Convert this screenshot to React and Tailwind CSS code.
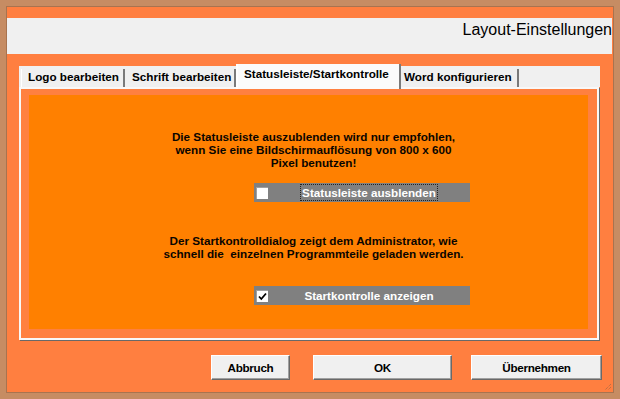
import React from "react";

const font = { fontFamily: '"Liberation Sans", Arial, sans-serif' };

function Tab({ label, selected, className = "" }) {
  if (selected) {
    return (
      <div className="relative z-10 h-[25px] mb-[-2px] bg-[#fbfbfb] border-l-2 border-l-white border-r-2 border-r-[#7a7a7a] pl-[6px] pt-[3px] text-[11.7px] leading-[14px] font-bold text-black whitespace-nowrap w-[165px]">
        {label}
      </div>
    );
  }
  return (
    <div className={`h-[18px] bg-[#f0f0f0] border-r-2 border-r-[#7a7a7a] pt-[1px] text-[11.7px] leading-[14px] font-bold text-black whitespace-nowrap ${className}`}>
      {label}
    </div>
  );
}

function CheckBar({ label, checked, focused }) {
  return (
    <div className="ml-[225px] w-[216px] h-[19px] bg-[#808080] flex items-center">
      <div className="ml-[2px] w-[12px] h-[12px] bg-white border-t border-l border-[#a0a0a0] flex items-center justify-center">
        {checked && (
          <svg width="9" height="9" viewBox="0 0 9 9">
            <path d="M1 4.5 L3.3 7 L8 1.5" stroke="#000" strokeWidth="1.8" fill="none" />
          </svg>
        )}
      </div>
      <div className="flex-1 flex justify-center">
        <span
          className={`px-[1px] text-[11.7px] leading-[15px] font-bold text-white whitespace-nowrap ${
            focused ? "outline outline-1 outline-dotted outline-[#222]" : ""
          }`}
        >
          {label}
        </span>
      </div>
    </div>
  );
}

function Btn({ label, w, className = "" }) {
  return (
    <div
      className={`h-[25px] bg-[#f0f0f0] border-t border-l border-t-white border-l-white border-r border-b border-r-[#696969] border-b-[#696969] shadow-[inset_-1px_-1px_0_#a0a0a0] flex items-center justify-center text-[11.7px] font-bold text-black tracking-[-0.3px] ${w} ${className}`}
    >
      {label}
    </div>
  );
}

export default function App() {
  return (
    <div style={font} className="w-[620px] h-[399px] bg-[#c68c63] p-[6px]">
      <div className="relative w-full h-full border border-[#a8734f] bg-[#ff7f40] flex flex-col">
        {/* title band */}
        <div className="mt-[11px] h-[36px] mr-[1px] bg-[#f0f0f0] flex justify-end">
          <div className="mt-[3px] text-[16px] leading-[18px] text-black">Layout-Einstellungen</div>
        </div>

        {/* tab control */}
        <div className="mt-[12px] ml-[12px] w-[581px] flex flex-col">
          <div className="h-[21px] bg-[#f0f0f0] flex items-end pl-[2px]">
            <Tab label="Logo bearbeiten" className="w-[104px] pl-[6px] border-l border-l-white" />
            <Tab label="Schrift bearbeiten" className="w-[111px] pl-[7px]" />
            <Tab label="Statusleiste/Startkontrolle" selected />
            <Tab label="Word konfigurieren" className="w-[118px] pl-[3px]" />
          </div>
          <div className="h-[253px] w-[580px] border-2 border-[#f8f8f8] shadow-[1px_1px_0_#696969] bg-[#ff8040] pl-[8px] pt-[6px] pr-[9px] pb-[9px]">
            <div className="h-full w-full bg-[#ff8000] flex flex-col">
              <div className="mt-[35px] pl-[10px] text-center text-[11.7px] leading-[13px] font-bold text-[#0a0500]">
                Die Statusleiste auszublenden wird nur empfohlen,
                <br />
                wenn Sie eine Bildschirmauflösung von 800 x 600
                <br />
                Pixel benutzen!
              </div>
              <div className="mt-[14px]">
                <CheckBar label="Statusleiste ausblenden" focused />
              </div>
              <div className="mt-[32px] pl-[10px] text-center text-[11.7px] leading-[13px] font-bold text-[#0a0500] whitespace-pre">
                {"Der Startkontrolldialog zeigt dem Administrator, wie\nschnell die  einzelnen Programmteile geladen werden."}
              </div>
              <div className="mt-[26px]">
                <CheckBar label="Startkontrolle anzeigen" checked />
              </div>
            </div>
          </div>
        </div>

        {/* buttons */}
        <div className="mt-[15px] flex justify-end pr-[11px]">
          <Btn label="Abbruch" w="w-[79px]" className="mr-[23px]" />
          <Btn label="OK" w="w-[139px]" className="mr-[19px]" />
          <Btn label="Übernehmen" w="w-[131px]" />
        </div>

        {/* resize grip */}
        <svg className="absolute right-[1px] bottom-[1px]" width="8" height="8" viewBox="0 0 8 8">
          <path d="M7 1 L1 7 M7 4 L4 7 M7 7 L7 7" stroke="#a06a48" strokeWidth="1" strokeDasharray="1 1" />
        </svg>
      </div>
    </div>
  );
}
